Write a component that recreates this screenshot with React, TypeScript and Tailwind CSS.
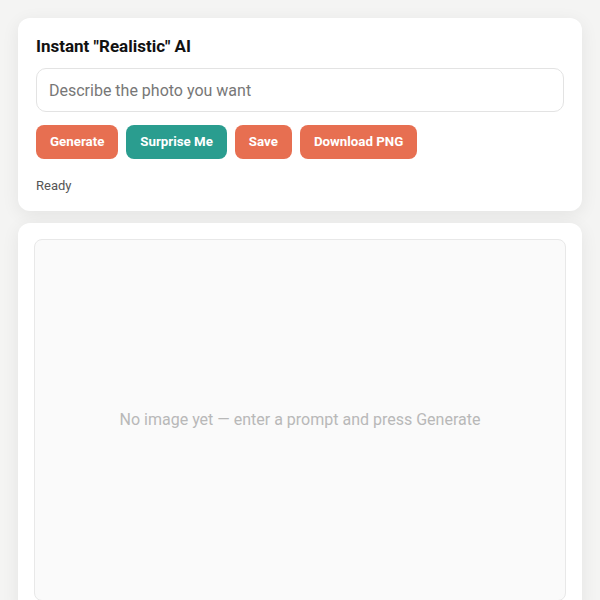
import {useState} from 'react';


const buttons = [
    {label: 'Generate', color: 'bg-[#e76f51]'},
    {label: 'Surprise Me', color: 'bg-[#2a9d8f]'},
    {label: 'Save', color: 'bg-[#e76f51]'},
    {label: 'Download PNG', color: 'bg-[#e76f51]'},
];


export default function App() {
    const [prompt, setPrompt] = useState('');

    return (
        <div className="min-h-screen bg-[#f4f4f3] p-[18px] font-['Roboto',sans-serif] flex flex-col gap-3">
            <div className="bg-white rounded-xl px-[18px] pt-[18px] pb-[17px] shadow-[0_4px_18px_rgba(0,0,0,0.07)]">
                <h1 className="text-[17px] font-bold text-[#111] leading-[21px]">Instant "Realistic" AI</h1>
                <input
                    value={prompt}
                    onChange={(e) => setPrompt(e.target.value)}
                    placeholder="Describe the photo you want"
                    className="mt-[11px] w-full h-[44px] rounded-[10px] border border-[#e3e3e3] px-3 text-base text-[#222] placeholder:text-[#777] outline-none"
                />
                <div className="mt-[13px] flex flex-row gap-2">
                    {buttons.map((b) => <button key={b.label}
                        className={`${b.color} h-[34px] px-[14px] rounded-lg text-white text-[13.3px] font-bold`}>{b.label}</button>)}
                </div>
                <div className="mt-[19px] text-[13px] text-[#555] leading-4">Ready</div>
            </div>
            <div className="bg-white rounded-xl p-4 shadow-[0_4px_18px_rgba(0,0,0,0.07)]">
                <div className="min-h-[362px] rounded-lg border border-[#e8e8e8] bg-[#fafafa] flex items-center justify-center">
                    <span className="text-base text-[#b8b8b8]">No image yet — enter a prompt and press Generate</span>
                </div>
            </div>
        </div>
    );
}
